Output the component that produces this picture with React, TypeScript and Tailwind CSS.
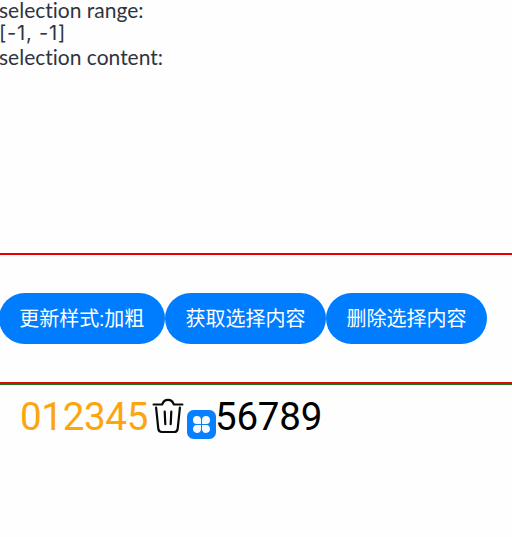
const button = "flex h-[51px] shrink-0 items-center justify-center rounded-full bg-[#007dff] pt-px text-[20px] text-white whitespace-nowrap";

function TrashIcon() {
  return (
    <svg className="mt-[13px] ml-[4px] h-[38px] w-[32px] shrink-0" viewBox="0 0 32 38" fill="none" stroke="#080808" strokeWidth="2.2" strokeLinecap="round" strokeLinejoin="round">
      <path d="M1.6 6.5H10.2C11.3 2.9 12.8 1.8 16 1.8S20.7 2.9 21.8 6.5H30.4M4.1 9.6L6.3 30.6Q6.6 34 9.9 34H22.1Q25.4 34 25.7 30.6L27.9 9.6M12.7 13.5L13.3 26.2M19.3 13.5L18.7 26.2" />
    </svg>
  );
}

function AppIcon() {
  return (
    <svg className="mt-[25px] ml-[3px] h-[29px] w-[29px] shrink-0" viewBox="0 0 29 29">
      <rect width="29" height="29" rx="6.5" fill="#087fff" />
      <g fill="#f4faff">
        <path d="M14 14H9.7A4 4 0 1 1 14 9.7Z" />
        <path d="M15 14V9.7A4 4 0 1 1 19.3 14Z" />
        <path d="M14 15V19.3A4 4 0 1 1 9.7 15Z" />
        <path d="M15 15H19.3A4 4 0 1 1 15 19.3Z" />
      </g>
    </svg>
  );
}

export default function App() {
  return (
    <main className="flex h-[537px] w-[512px] flex-col overflow-hidden bg-[#fefefe] font-['Roboto','Noto_Sans_CJK_SC',sans-serif]">
      <section className="h-[253px] shrink-0 font-['Lato',sans-serif] text-[21px] leading-[23.5px] text-[#2f3440] [font-variant-ligatures:none]">
        <div className="-mt-[2px] -ml-px">
          <p>selection range:</p>
          <p className="font-['Inter',sans-serif] text-[20px] tracking-[0.8px]">[-1, -1]</p>
          <p>selection content:</p>
        </div>
      </section>
      <section className="flex h-[131px] shrink-0 items-center border-y-2 border-t-[#e80000] border-b-[#d80c00]">
        <div className="-ml-[1.5px] flex">
          <button className={button + " w-[166.5px]"}>更新样式:加粗</button>
          <button className={button + " w-[161px]"}>获取选择内容</button>
          <button className={button + " w-[161px]"}>删除选择内容</button>
        </div>
      </section>
      <section className="flex flex-1 items-start border-t border-[#207020] pl-[20px] text-[38.5px] leading-[46px]">
        <span className="mt-[9px] w-[128px] tracking-[-0.3px] text-[#fca510]">012345</span>
        <TrashIcon />
        <AppIcon />
        <span className="mt-[9px] -ml-px tracking-[-0.2px] text-black">56789</span>
      </section>
    </main>
  );
}
